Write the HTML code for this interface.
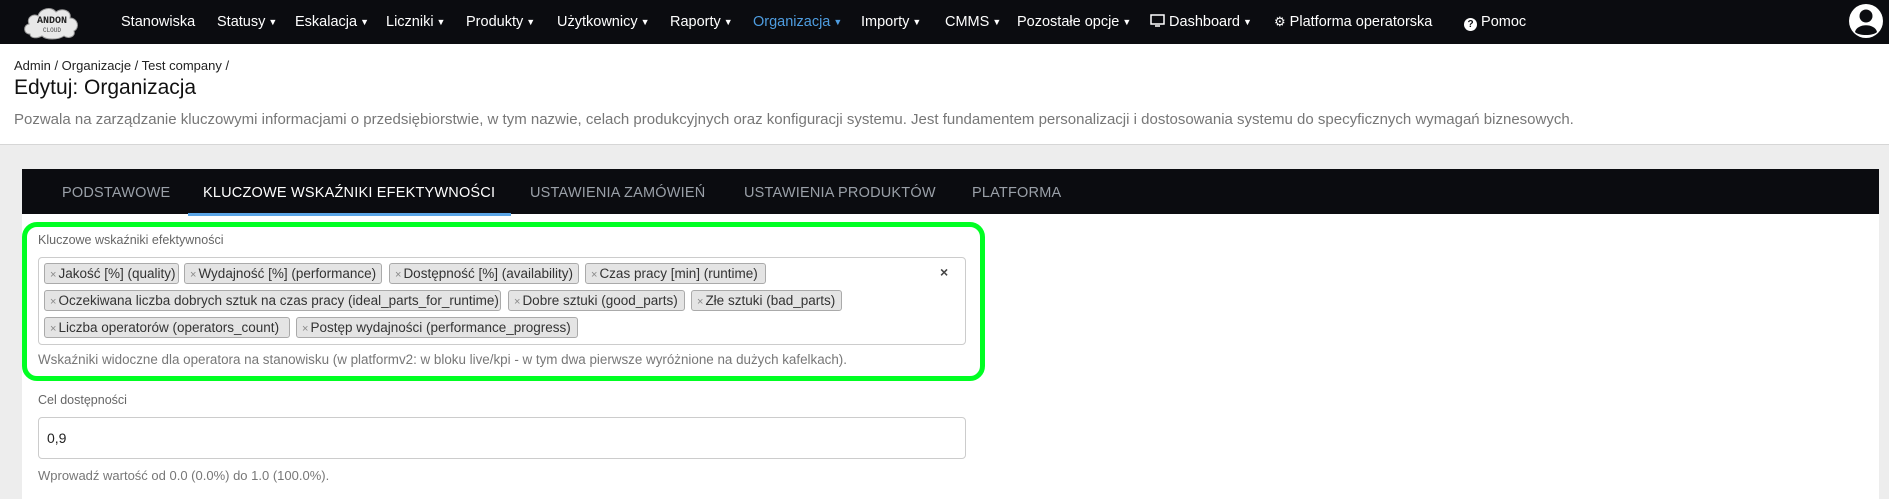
<!DOCTYPE html>
<html><head><meta charset="utf-8"><style>
*{margin:0;padding:0;box-sizing:border-box}
body{width:1889px;height:490px;overflow:hidden;background:#ededed;font-family:"Liberation Sans",sans-serif;position:relative}
.a{position:absolute;white-space:nowrap}
.nav{position:absolute;left:0;top:0;width:1889px;height:44px;background:#0b0c10}
.ni{position:absolute;top:0;line-height:44px;color:#fff;font-size:14.5px;white-space:nowrap}
.ni.act{color:#4e9de0}
.car{font-size:9px;margin-left:3px;vertical-align:1px}
.top{position:absolute;left:0;top:44px;width:1889px;height:101px;background:#fff;border-bottom:1px solid #d6d6d6}
.card{position:absolute;left:22px;top:169px;width:1857px;height:330px;background:#fff}
.tabs{position:absolute;left:0;top:0;width:100%;height:45px;background:#0b0c10}
.tab{position:absolute;top:0;line-height:48px;color:#9aa0a8;font-size:14.5px;letter-spacing:.2px}
.tag{position:absolute;height:21px;line-height:19px;background:#e4e4e4;border:1px solid #aaa;border-radius:3px;font-size:13.5px;color:#333;padding-left:5px;white-space:nowrap;overflow:hidden}
.tag b{color:#888;font-weight:normal;font-size:11px;margin-right:2px}
.lbl{font-size:12.5px;color:#666}
</style></head><body>
<div class="nav">
<svg class="a" style="left:22px;top:4px" width="60" height="36" viewBox="0 0 60 36"><path d="M8 30 C1 30 1 21 7 20 C4 13 12 9 16 12 C18 4 30 2 34 8 C40 3 50 7 48 14 C56 14 58 24 52 27 C54 33 46 35 42 32 C36 36 24 36 20 32 C14 35 8 34 8 30Z" fill="#e8e8e8" stroke="#999"/><text x="30" y="19" font-size="10" font-weight="bold" text-anchor="middle" fill="#222" font-family="Liberation Mono">ANDON</text><text x="30" y="28" font-size="6" text-anchor="middle" fill="#444" font-family="Liberation Mono">CLOUD</text></svg>
<div class="ni" style="left:121px">Stanowiska</div>
<div class="ni" style="left:217px">Statusy<span class="car">▼</span></div>
<div class="ni" style="left:295px">Eskalacja<span class="car">▼</span></div>
<div class="ni" style="left:386px">Liczniki<span class="car">▼</span></div>
<div class="ni" style="left:466px">Produkty<span class="car">▼</span></div>
<div class="ni" style="left:557px">Użytkownicy<span class="car">▼</span></div>
<div class="ni" style="left:670px">Raporty<span class="car">▼</span></div>
<div class="ni act" style="left:753px">Organizacja<span class="car">▼</span></div>
<div class="ni" style="left:861px">Importy<span class="car">▼</span></div>
<div class="ni" style="left:945px">CMMS<span class="car">▼</span></div>
<div class="ni" style="left:1017px">Pozostałe opcje<span class="car">▼</span></div>
<div class="ni" style="left:1150px"><svg width="15" height="13" viewBox="0 0 15 13" style="vertical-align:-1px"><rect x="1" y="1" width="13" height="9" fill="none" stroke="#fff" stroke-width="1.5"/><path d="M5 12h5" stroke="#fff" stroke-width="1.5"/></svg> Dashboard<span class="car">▼</span></div>
<div class="ni" style="left:1274px"><span style="font-size:13px">⚙</span> Platforma operatorska</div>
<div class="ni" style="left:1464px"><span style="display:inline-block;width:13px;height:13px;border-radius:50%;background:#fff;color:#0b0c10;font-size:10px;line-height:13px;text-align:center;font-weight:bold;vertical-align:-1px">?</span> Pomoc</div>
<svg class="a" style="left:1848px;top:3px" width="36" height="36" viewBox="0 0 36 36"><circle cx="18" cy="18" r="17" fill="#fff"/><circle cx="18" cy="13" r="6.5" fill="#0b0c10"/><path d="M7 29 C9 20 27 20 29 29 C25 33 11 33 7 29Z" fill="#0b0c10"/></svg>
</div>
<div class="top">
<div class="a" style="left:14px;top:14px;font-size:13px;color:#222">Admin / Organizacje / Test company /</div>
<div class="a" style="left:14px;top:32px;font-size:21px;color:#111">Edytuj: Organizacja</div>
<div class="a" style="left:14px;top:67px;font-size:15px;color:#777">Pozwala na zarządzanie kluczowymi informacjami o przedsiębiorstwie, w tym nazwie, celach produkcyjnych oraz konfiguracji systemu. Jest fundamentem personalizacji i dostosowania systemu do specyficznych wymagań biznesowych.</div>
</div>
<div class="card">
<div class="tabs">
<div class="tab" style="left:40px">PODSTAWOWE</div>
<div class="tab" style="left:181px;color:#fff">KLUCZOWE WSKAŹNIKI EFEKTYWNOŚCI</div>
<div class="tab" style="left:508px">USTAWIENIA ZAMÓWIEŃ</div>
<div class="tab" style="left:722px">USTAWIENIA PRODUKTÓW</div>
<div class="tab" style="left:950px">PLATFORMA</div>
<div class="a" style="left:166px;top:44px;width:323px;height:3px;background:#5aa5e6"></div>
</div>
</div>
<div class="a" style="left:22px;top:222px;width:963px;height:159px;border:5px solid #00ff22;border-radius:15px"></div>
<div class="a lbl" style="left:38px;top:233px">Kluczowe wskaźniki efektywności</div>
<div class="a" style="left:38px;top:257px;width:928px;height:88px;border:1px solid #ccc;border-radius:4px"></div>
<div class="a" style="left:940px;top:264px;font-size:14px;color:#444;font-weight:bold">×</div>
<div class="tag" style="left:44px;top:263px;width:135px"><b>×</b>Jakość [%] (quality)</div>
<div class="tag" style="left:184px;top:263px;width:198px"><b>×</b>Wydajność [%] (performance)</div>
<div class="tag" style="left:389px;top:263px;width:190px"><b>×</b>Dostępność [%] (availability)</div>
<div class="tag" style="left:585px;top:263px;width:181px"><b>×</b>Czas pracy [min] (runtime)</div>
<div class="tag" style="left:44px;top:290px;width:457px"><b>×</b>Oczekiwana liczba dobrych sztuk na czas pracy (ideal_parts_for_runtime)</div>
<div class="tag" style="left:508px;top:290px;width:177px"><b>×</b>Dobre sztuki (good_parts)</div>
<div class="tag" style="left:691px;top:290px;width:151px"><b>×</b>Złe sztuki (bad_parts)</div>
<div class="tag" style="left:44px;top:317px;width:246px"><b>×</b>Liczba operatorów (operators_count)</div>
<div class="tag" style="left:296px;top:317px;width:282px"><b>×</b>Postęp wydajności (performance_progress)</div>
<div class="a lbl" style="left:38px;top:352px;font-size:13.4px;color:#777">Wskaźniki widoczne dla operatora na stanowisku (w platformv2: w bloku live/kpi - w tym dwa pierwsze wyróżnione na dużych kafelkach).</div>
<div class="a lbl" style="left:38px;top:393px">Cel dostępności</div>
<div class="a" style="left:38px;top:417px;width:928px;height:42px;border:1px solid #ccc;border-radius:4px"></div>
<div class="a" style="left:47px;top:430px;font-size:14px;color:#222">0,9</div>
<div class="a lbl" style="left:38px;top:468px;color:#777;font-size:13px">Wprowadź wartość od 0.0 (0.0%) do 1.0 (100.0%).</div>
</body></html>
